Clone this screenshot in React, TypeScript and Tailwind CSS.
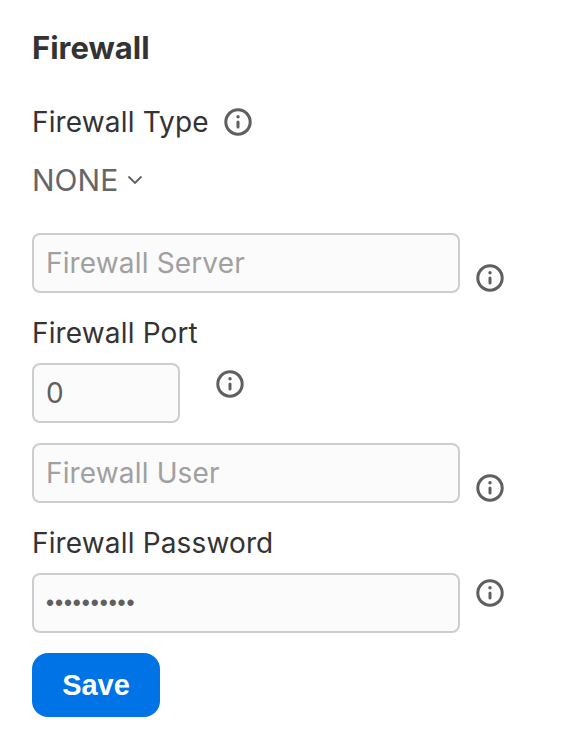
const InfoIcon = ({ className = "" }: { className?: string }) => (
  <svg viewBox="0 0 28 28" className={"w-7 h-7 shrink-0 " + className} fill="none">
    <circle cx="14" cy="14" r="12.2" stroke="#5f5f5f" strokeWidth="3" />
    <circle cx="14" cy="8.8" r="1.7" fill="#5f5f5f" />
    <rect x="12.5" y="12.4" width="3" height="8" rx="1.5" fill="#5f5f5f" />
  </svg>
);

const inputBase =
  "h-[60px] rounded-[8px] border-[2.5px] border-[#cdcdcd] bg-[#fbfbfb] px-[12px] text-[#5f5f5f] outline-none";
const inputClass = inputBase + " text-[28px] tracking-[0.15px] placeholder:text-[#a0a0a0]";

const App = () => {
  return (
    <div className="w-[562px] h-[746px] bg-white px-[32px] pt-[28px] font-['Inter','Liberation_Sans',sans-serif] text-[#333333] overflow-hidden">
      <h1 className="text-[31px] leading-[40px] font-bold">Firewall</h1>

      <div className="mt-[34px] flex items-center h-[40px]">
        <label className="text-[28px] leading-[40px] tracking-[0.15px]">Firewall Type</label>
        <InfoIcon className="ml-[15px]" />
      </div>

      <div className="mt-[18px] flex items-center h-[40px] text-[#666666]">
        <span className="text-[30px] leading-[40px]">NONE</span>
        <svg viewBox="0 0 16 10" className="ml-[9px] w-[16px] h-[10px]" fill="none">
          <path d="M1.5 1.5 8 8l6.5-6.5" stroke="#5f5f5f" strokeWidth="1.8" />
        </svg>
      </div>

      <div className="mt-[33px] flex">
        <input className={inputClass + " w-[428px]"} placeholder="Firewall Server" />
        <InfoIcon className="ml-[16px] mt-[31px]" />
      </div>

      <label className="mt-[20px] block text-[28px] leading-[40px] tracking-[0.15px]">Firewall Port</label>
      <div className="mt-[10px] flex">
        <input className={inputClass + " w-[148px]"} defaultValue="0" />
        <InfoIcon className="ml-[36px] mt-[7px]" />
      </div>

      <div className="mt-[20px] flex">
        <input className={inputClass + " w-[428px]"} placeholder="Firewall User" />
        <InfoIcon className="ml-[16px] mt-[31px]" />
      </div>

      <label className="mt-[20px] block text-[28px] leading-[40px] tracking-[0.15px]">Firewall Password</label>
      <div className="mt-[10px] flex">
        <input
          className={inputBase + " w-[428px] font-['Liberation_Sans',sans-serif] text-[23px] tracking-[0.9px]"}
          type="password"
          defaultValue="1234567890"
        />
        <InfoIcon className="ml-[16px] mt-[6px]" />
      </div>

      <button className="mt-[20px] block w-[128px] h-[64px] rounded-[16px] bg-[#0073e6] pt-[1px] text-white text-[29px] font-bold font-['Liberation_Sans',sans-serif]">
        Save
      </button>
    </div>
  );
};

export default App;
